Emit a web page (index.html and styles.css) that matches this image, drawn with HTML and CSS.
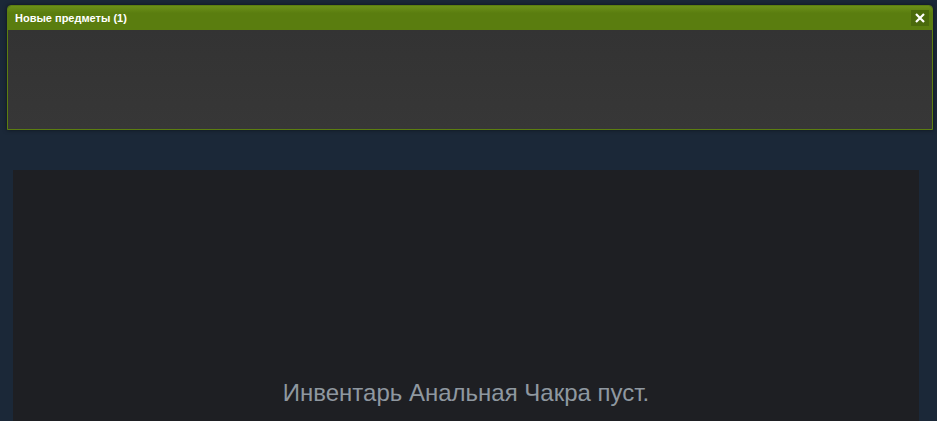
FILE: index.html
```html
<!DOCTYPE html>
<html lang="ru">
  <head>
    <meta charset="UTF-8" />
    <title>Инвентарь</title>
    <link rel="stylesheet" href="styles.css">
  </head>
  <body>
    <div class="new-items">
      <div class="new-items-header">
        <span class="new-items-title">Новые предметы (1)</span>
        <div class="close-btn">
          <svg width="10" height="10" viewBox="0 0 10 10">
            <path d="M1 1 L9 9 M9 1 L1 9" stroke="#fff" stroke-width="2.2" />
          </svg>
        </div>
      </div>
      <div class="new-items-body"></div>
    </div>

    <div class="inventory">
      <div class="empty-text">Инвентарь Анальная Чакра пуст.</div>
    </div>
  </body>
</html>
```

FILE: styles.css
```css
body {
  margin: 0;
  padding: 0;
  background-color: #1b2838;
  font-family: Arial, "Liberation Sans", sans-serif;
  height: 421px;
  overflow: hidden;
}
.new-items {
  margin: 5px 4px 0 7px;
  border: 1px solid #5c7e10;
  border-radius: 4px 4px 0 0;
  box-shadow: 0 0 4px rgba(0, 0, 0, 0.5);
}
.new-items-header {
  height: 24px;
  background: linear-gradient(to bottom, #6b9018, #5a7d0f 30%);
  display: flex;
  align-items: center;
  justify-content: space-between;
  padding: 0 3px 0 7px;
  border-radius: 3px 3px 0 0;
}
.new-items-title {
  color: #fff;
  font-size: 11px;
  font-weight: bold;
}
.close-btn {
  width: 18px;
  height: 16px;
  background-color: #4a6a0c;
  display: flex;
  align-items: center;
  justify-content: center;
}
.new-items-body {
  height: 99px;
  background: linear-gradient(to bottom, #333333, #373737);
}
.inventory {
  margin: 40px 18px 0 13px;
  height: 260px;
  background-color: #1e1f23;
  padding-top: 208px;
  box-sizing: border-box;
}
.empty-text {
  text-align: center;
  color: #8f98a0;
  font-size: 24px;
  line-height: 30px;
}
```
